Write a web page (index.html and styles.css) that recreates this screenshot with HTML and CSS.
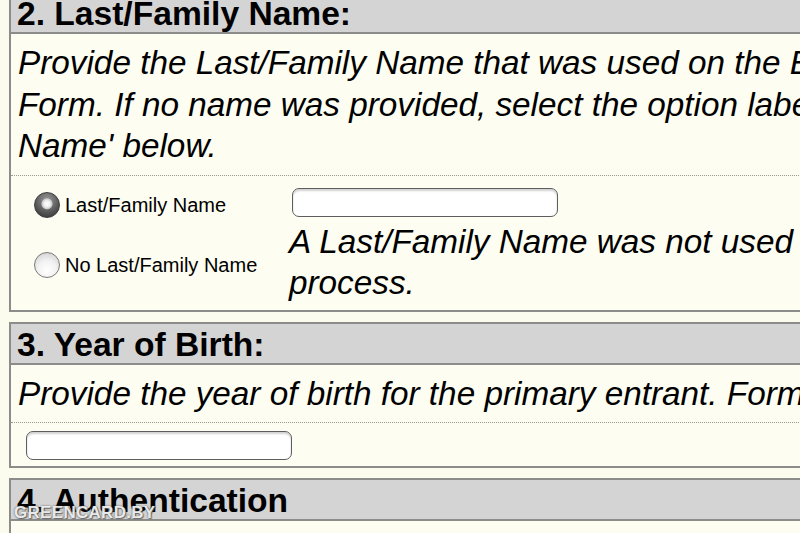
FILE: index.html
```html
<!DOCTYPE html>
<html lang="en">
<head>
<meta charset="utf-8">
<title>Entrant Status Check</title>
<link rel="stylesheet" href="styles.css">
</head>
<body>
<div class="page">
  <section class="section first">
    <h2 class="section-head">2. Last/Family Name:</h2>
    <p class="hint">Provide the Last/Family Name that was used on the Entry<br>Form. If no name was provided, select the option labeled 'No Last/Family<br>Name' below.</p>
    <div class="name-row">
      <div class="options">
        <label class="option"><span class="radio checked"></span><span class="opt-label">Last/Family Name</span></label>
        <label class="option"><span class="radio"></span><span class="opt-label">No Last/Family Name</span></label>
      </div>
      <div class="answer">
        <span class="field"></span>
        <p class="note">A Last/Family Name was not used during the entry<br>process.</p>
      </div>
    </div>
  </section>

  <section class="section">
    <h2 class="section-head">3. Year of Birth:</h2>
    <p class="hint">Provide the year of birth for the primary entrant. Format: YYYY</p>
    <div class="year-row">
      <span class="field"></span>
    </div>
  </section>

  <section class="section">
    <h2 class="section-head">4. Authentication</h2>
    <div class="auth-body"></div>
  </section>
</div>
<div class="watermark">GREENCARD.BY</div>
</body>
</html>
```
FILE: styles.css
```css
html, body {
  margin: 0;
  padding: 0;
  overflow: hidden;
  background: #fbfbee;
  height: 100%;
}

body {
  font-family: "Liberation Sans", Arial, sans-serif;
  color: #000;
  position: relative;
}

.page {
  padding-left: 9px;
  width: 1400px;
}

.section {
  border: 2px solid #8c8c8a;
  background: #fdfdf1;
  margin: 0 0 10px 0;
}

.section.first {
  margin-top: -9px;
}

.section-head {
  margin: 0;
  background: #d4d4d4;
  border-bottom: 2px solid #8c8c8a;
  font-size: 33.6px;
  font-weight: bold;
  line-height: 36px;
  padding: 3px 6px 0;
}

.hint {
  margin: 0;
  font-style: italic;
  font-size: 33.3px;
  line-height: 41.5px;
  padding: 8px 7px 8px;
  border-bottom: 1px dotted #9a9a95;
  white-space: nowrap;
}

.name-row {
  display: grid;
  grid-template-columns: 255px 1fr;
  padding: 12px 0 7px 23px;
}

.options {
  display: flex;
  flex-direction: column;
  gap: 26px;
}

.option {
  display: flex;
  align-items: center;
  height: 34px;
  gap: 5px;
}

.radio {
  width: 26px;
  height: 26px;
  border-radius: 50%;
  box-sizing: border-box;
  border: 1.5px solid #7a7a7a;
  background: radial-gradient(circle at 50% 70%, #ffffff 0%, #f2f2f2 45%, #c8c8c8 100%);
  flex: none;
}

.radio.checked {
  border-color: #3a3a3a;
  background:
    radial-gradient(circle at 50% 45%, #ffffff 0, #f0f0f0 3px, #c9c9c9 5px, transparent 6px),
    radial-gradient(circle at 50% 30%, #9a9a9a 0%, #555 60%, #2e2e2e 100%);
}

.opt-label {
  font-size: 20px;
  padding-top: 2px;
}

.answer {
  display: flex;
  flex-direction: column;
}

.field {
  display: block;
  width: 266px;
  height: 29px;
  box-sizing: border-box;
  border: 1.5px solid #5e5e5e;
  border-radius: 7px;
  background: #fff;
  box-shadow: inset 0 2px 2px rgba(0, 0, 0, 0.18);
}

.answer .field {
  margin-left: 3px;
}

.note {
  margin: 4px 0 0;
  font-style: italic;
  font-size: 33.3px;
  line-height: 41px;
  white-space: nowrap;
}

.year-row {
  padding: 8px 0 6px 15px;
}

.auth-body {
  height: 60px;
}

.watermark {
  position: absolute;
  left: 14px;
  top: 503px;
  font-family: "Liberation Sans", Arial, sans-serif;
  font-weight: bold;
  font-size: 17px;
  letter-spacing: 0.3px;
  color: rgba(255, 255, 255, 0.88);
  text-shadow: 0 0 2px rgba(60, 60, 60, 0.9), 1px 1px 1px rgba(80, 80, 80, 0.7);
}
```
